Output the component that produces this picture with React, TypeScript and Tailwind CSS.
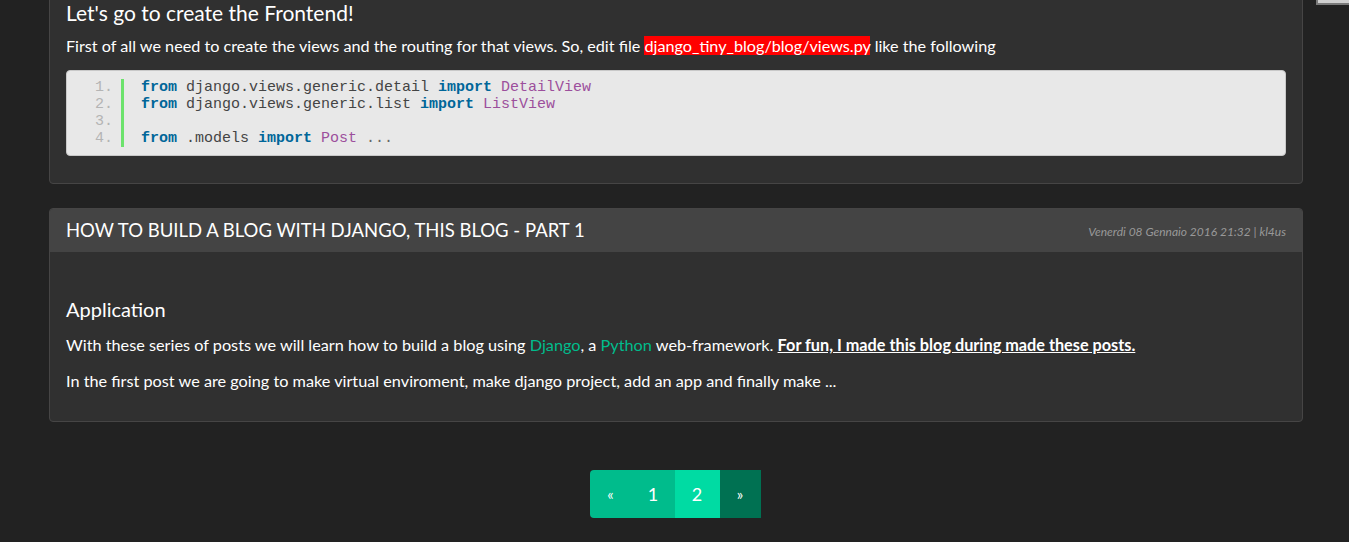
import React from 'react';

const kw = 'font-bold text-[#006699]';
const cls = 'text-[#9c4f9c]';

function CodeBlock() {
    const lines: React.ReactNode[] = [
        <>
            <span className={kw}>from</span> django.views.generic.detail <span className={kw}>import</span>{' '}
            <span className={cls}>DetailView</span>
        </>,
        <>
            <span className={kw}>from</span> django.views.generic.list <span className={kw}>import</span>{' '}
            <span className={cls}>ListView</span>
        </>,
        <>&nbsp;</>,
        <>
            <span className={kw}>from</span> .models <span className={kw}>import</span>{' '}
            <span className={cls}>Post</span> <span className="text-[#666]">...</span>
        </>,
    ];

    return (
        <div className="flex bg-[#e8e8e8] border border-[#c8c8c8] rounded-[4px] py-[8px] font-['Liberation_Mono',monospace] text-[15px] leading-[17px] text-[#444]">
            {/* line numbers */}
            <div className="w-[46px] text-right text-[#b4b4b4]">
                {lines.map((_, i) => (
                    <div key={i}>{i + 1}.</div>
                ))}
            </div>
            <div className="ml-[8px] w-[3px] bg-[#6ce26c]" />
            <div className="pl-[17px] whitespace-pre">
                {lines.map((l, i) => (
                    <div key={i}>{l}</div>
                ))}
            </div>
        </div>
    );
}

function Pagination() {
    return (
        <div className="flex justify-center mt-[48px] mb-[40px]">
            <div className="flex h-[48px] text-white text-[18px] font-['Lato',sans-serif] -translate-x-[1px]">
                <a className="w-[42px] flex items-center justify-center bg-[#00bc8c] rounded-l-[4px] text-[15px]">«</a>
                <a className="w-[43px] flex items-center justify-center bg-[#00bc8c]">1</a>
                <a className="w-[45px] flex items-center justify-center bg-[#00dba3]">2</a>
                <a className="w-[41px] flex items-center justify-center bg-[#007152] text-[15px]">»</a>
            </div>
        </div>
    );
}

export default function App() {
    return (
        <div className="min-h-screen bg-[#222222] font-['Lato',sans-serif] text-white overflow-hidden">
            <div className="flex pl-[49px] gap-[13px]">
                {/* Main column */}
                <div className="w-[1254px] shrink-0 -mt-[75px]">
                    {/* Post 1 (scrolled) */}
                    <div className="bg-[#303030] border border-[#464545] rounded-[4px] px-[16px] pt-[55px] pb-[15px]">
                        <h3 className="text-[21px] leading-[23px] mb-[10px] mt-[20px]">Let's go to create the Frontend!</h3>
                        <p className="text-[16.2px] leading-[24px] mb-[12px]">
                            First of all we need to create the views and the routing for that views. So, edit file{' '}
                            <span className="bg-[#ff0000]">django_tiny_blog/blog/views.py</span> like the following
                        </p>
                        <CodeBlock />
                        <div className="h-[12px]" />
                    </div>

                    {/* Post 2 */}
                    <div className="mt-[24px] bg-[#303030] border border-[#464545] rounded-[4px] overflow-hidden">
                        <div className="flex items-center justify-between bg-[#444444] h-[43px] px-[16px]">
                            <h2 className="text-[18.5px] uppercase">How to build a blog with Django, this blog - part 1</h2>
                            <span className="text-[12px] italic text-[#999999] mt-[3px]">Venerdi 08 Gennaio 2016 21:32 | kl4us</span>
                        </div>
                        <div className="px-[16px] pt-[46px] pb-[16px]">
                            <h4 className="text-[20px] leading-[22px] mb-[13px]">Application</h4>
                            <p className="text-[16.25px] leading-[24px] mb-[12px]">
                                With these series of posts we will learn how to build a blog using{' '}
                                <a className="text-[#00bc8c]">Django</a>, a <a className="text-[#00bc8c]">Python</a> web-framework.{' '}
                                <a className="font-bold underline">For fun, I made this blog during made these posts.</a>
                            </p>
                            <p className="text-[16.25px] leading-[24px] mb-[12px]">
                                In the first post we are going to make virtual enviroment, make django project, add an app and finally make ...
                            </p>
                        </div>
                    </div>

                    <Pagination />
                </div>

                {/* Sidebar (scrolled) */}
                <div className="flex-1">
                    <div className="h-[5px] bg-[#d0d0d0] border-l-2 border-b-2 border-[#7a7a7a]" />
                </div>
            </div>
        </div>
    );
}
